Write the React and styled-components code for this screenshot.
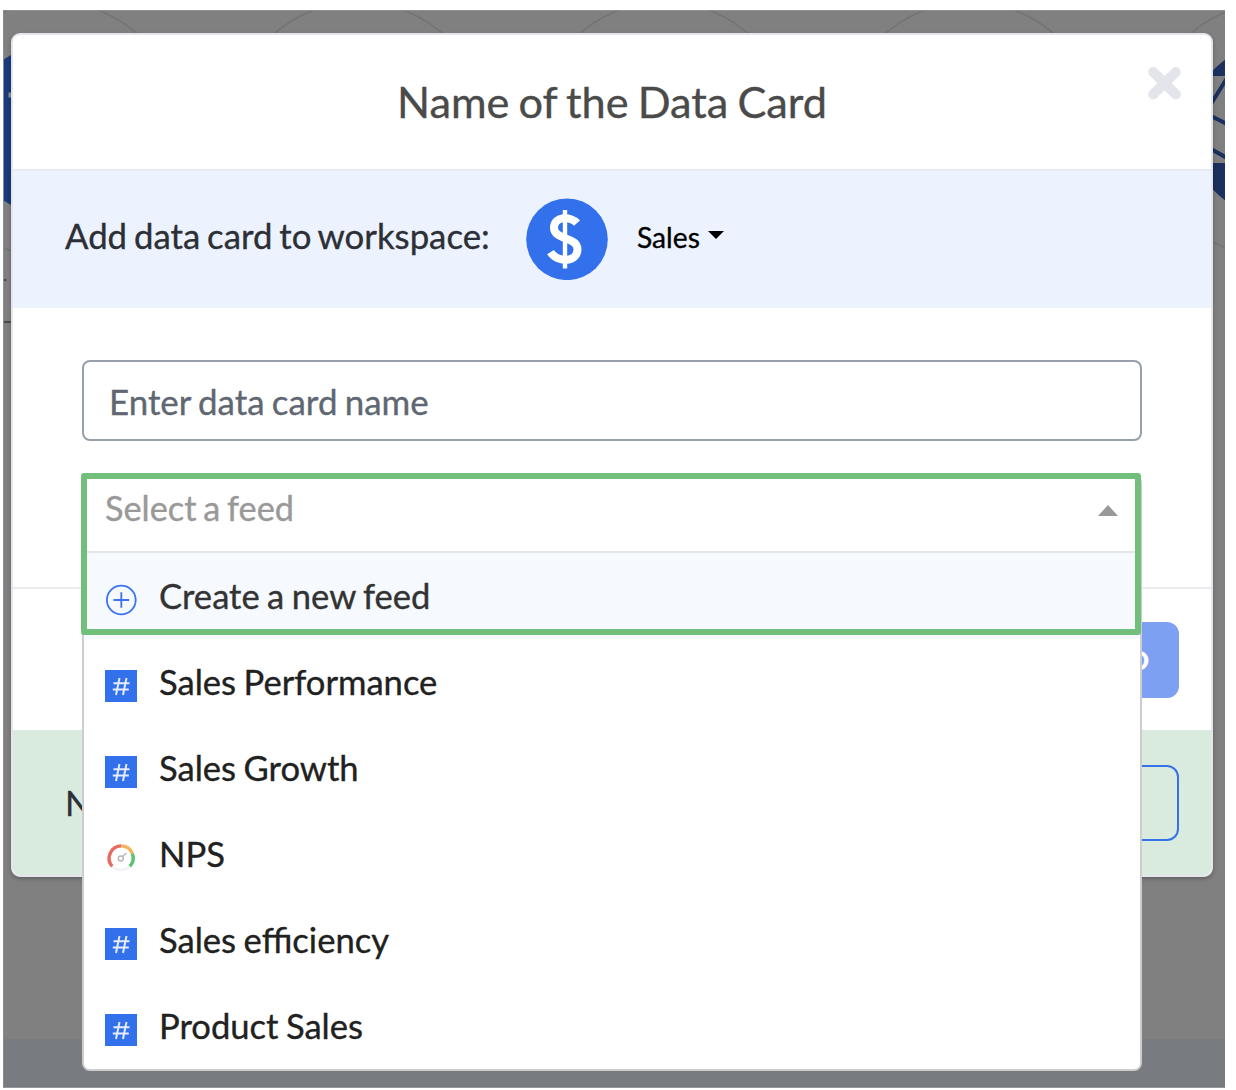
import React from "react";
import styled, { createGlobalStyle } from "styled-components";

const Global = createGlobalStyle`
  * { box-sizing: border-box; }
  body {
    margin: 0;
    background: #fff;
    font-family: Lato, "Liberation Sans", sans-serif;
    word-spacing: -2px;
    -webkit-text-stroke: 0.35px currentColor;
  }
`;

const Page = styled.main`
  width: 1236px;
  height: 1090px;
  padding: 10px 11px 2px 3px;
  overflow: hidden;
`;

const Backdrop = styled.div`
  position: relative;
  height: 1078px;
  padding: 23px 12px 0 7px;
  overflow: hidden;
  background: linear-gradient(#808080 0 1029px, #787b80 1029px);
  border-left: 1px solid #8c8c8f;
  border-bottom: 1px solid #96969b;
`;

const Scenery = styled.svg`
  position: absolute;
  left: -1px;
  top: 0;
`;

const Modal = styled.section`
  position: relative;
  width: 1202px;
  height: 844px;
  display: flex;
  flex-direction: column;
  background: #fff;
  border: 2px solid #e5e6ec;
  border-radius: 9px;
  box-shadow: 0 2px 4px rgba(0, 0, 0, 0.25);
`;

const Header = styled.header`
  position: relative;
  height: 136px;
  display: flex;
  justify-content: center;
  padding-top: 40px;
  border-bottom: 2px solid #e7ebf0;
`;

const Title = styled.h1`
  margin: 0;
  font-size: 43.3px;
  line-height: 52px;
  font-weight: 400;
  color: #4a4a4a;
  white-space: nowrap;
`;

const CloseButton = styled.button`
  position: absolute;
  right: 30px;
  top: 31px;
  padding: 0;
  border: 0;
  background: none;
  line-height: 0;
`;

const Workspace = styled.div`
  height: 137px;
  display: flex;
  align-items: center;
  padding: 0 0 1px 52px;
  background: #ecf3fe;
`;

const Label = styled.span`
  width: 461px;
  padding-bottom: 7px;
  font-size: 34.75px;
  line-height: 44px;
  color: #2c3036;
  white-space: nowrap;
`;

const WorkspacePicker = styled.div`
  display: flex;
  align-items: center;
  font-size: 28.2px;
  line-height: 36px;
  color: #000;
`;

const PickerName = styled.span`
  margin-left: 29px;
  padding-bottom: 5px;
`;

const Caret = styled.i`
  margin-left: ${(p) => p.$gap || 0}px;
  margin-bottom: ${(p) => p.$lift || 0}px;
  border: ${(p) => p.$size}px solid transparent;
  border-${(p) => (p.$up ? "bottom" : "top")}: ${(p) => p.$tall}px solid ${(p) => p.$color};
  border-${(p) => (p.$up ? "top" : "bottom")}: 0;
`;

const Body = styled.div`
  height: 281px;
  padding: 52px 69px 0;
  border-bottom: 2px solid #ebecf0;
`;

const NameInput = styled.input`
  display: block;
  width: 1060px;
  height: 81px;
  padding: 2px 26px 0 25px;
  border: 2px solid #979fab;
  border-radius: 8px;
  background: #fff;
  font: 400 34.9px Lato, "Liberation Sans", sans-serif;
  word-spacing: -1.6px;
  &::placeholder { color: #5f6772; opacity: 1; }
`;

const Select = styled.div`
  position: relative;
  width: 1060px;
  height: 78px;
  margin-top: 34px;
`;

const Menu = styled.div`
  position: absolute;
  inset: 0 0 auto 0;
  height: 596px;
  border: 2px solid #cdcdcd;
  border-radius: 8px;
  background: #fff;
  overflow: hidden;
`;

const Trigger = styled.div`
  height: 76px;
  display: flex;
  align-items: center;
  justify-content: space-between;
  padding: 0 22px 13px 21px;
  border-bottom: 2px solid #e4e5e5;
  font-size: 34.3px;
  color: #999;
`;

const Option = styled.div`
  height: 86px;
  display: flex;
  align-items: center;
  background: ${(p) => (p.$active ? "#f6f9fe" : "#fff")};
  color: ${(p) => (p.$active ? "#333" : "#212121")};
  padding: 0 21px;
  font-size: 34.6px;
  line-height: 44px;
  word-spacing: -1.4px;
`;

const OptionIcon = styled.span`
  width: 32px;
  height: 32px;
  margin: 8px 22px 0 0;
  line-height: 0;
`;

const Highlight = styled.div`
  position: absolute;
  left: -1px;
  top: -2px;
  width: 1060px;
  height: 162px;
  border: 6px solid #72be7b;
  border-radius: 3px;
`;

const Footer = styled.footer`
  height: 141px;
  display: flex;
  justify-content: flex-end;
  padding: 33px 32px 0 0;
`;

const Button = styled.button`
  width: 170px;
  height: 76px;
  padding: 0 28px 1px 0;
  border: 2px solid ${(p) => (p.$outline ? "#3972e8" : "#7ea0f2")};
  border-radius: 12px;
  background: ${(p) => (p.$outline ? "transparent" : "#7ea0f2")};
  color: #fff;
  font: 700 27px Lato, "Liberation Sans", sans-serif;
  text-align: right;
`;

const Notice = styled.div`
  flex: 1;
  display: flex;
  justify-content: space-between;
  padding: 35px 32px 0 52px;
  background: #d9ebde;
  border-radius: 0 0 7px 7px;
  font-size: 34.8px;
  line-height: 75px;
  color: #2c3036;
`;

function BackgroundArt() {
  return (
    <Scenery width="1222" height="1078" viewBox="3 10 1222 1078" fill="none">
      <g stroke="#717478" strokeWidth="1.6">
        {[53, 358.5, 664, 969.5, 1275].map((x) => (
          <circle key={x} cx={x} cy="130" r="128" />
        ))}
      </g>
      <path d="M3 10.2H1225" stroke="#969696" />
      <circle cx="53" cy="130" r="86" fill="#1a3a7d" />
      <path d="M8.5 95H12" stroke="#8d929d" strokeWidth="5" />
      <circle cx="1277" cy="130" r="87.5" fill="#1b305e" />
      <path d="M1211 76H1226V163H1211Z" fill="#808080" />
      <path d="M1211 104L1227 78M1211 116L1227 124M1211 149L1227 158" stroke="#1b305e" strokeWidth="4" />
      <path d="M3 280H6.5M4 322H12" stroke="#4b4b4b" strokeWidth="2" />
    </Scenery>
  );
}

function CloseIcon() {
  return (
    <svg width="33" height="34" viewBox="0 0 33 34">
      <path d="M5.2 6L27.8 28.4M27.8 6L5.2 28.4" stroke="#e4e5ea" strokeWidth="10" strokeLinecap="round" />
    </svg>
  );
}

function DollarIcon() {
  return (
    <svg width="82" height="82" viewBox="0 0 82 82" fill="none">
      <circle cx="41" cy="41.3" r="40.800" fill="#3370eb" />
      <path d="M51 25.200C45 18.200 28 17.700 28 29.700C28 42.200 51.500 38.700 51.500 51.200C51.500 65 31 64.500 24.500 54.200" stroke="#fff" strokeWidth="8" />
      <path d="M39 12V70.500" stroke="#fff" strokeWidth="4.400" />
    </svg>
  );
}

function PlusIcon() {
  return (
    <svg width="32" height="32" viewBox="0 0 32 32" fill="none" stroke="#3c74ed" strokeWidth="1.8">
      <circle cx="16.300" cy="16" r="14.400" />
      <path d="M8.500 16H24.200M16.300 8.200V23.800" />
    </svg>
  );
}

function HashIcon() {
  return (
    <svg width="32" height="32" viewBox="0 0 32 32" fill="none">
      <path d="M0 0H32V32H0Z" fill="#3370eb" />
      <path d="M14.500 8L11 25M21.500 8L18 25M8.500 13.200H24.500M7.800 19.500H23.800" stroke="#e4ecfd" strokeWidth="2" />
    </svg>
  );
}

function GaugeIcon() {
  return (
    <svg width="32" height="32" viewBox="0 0 32 32" fill="none" strokeWidth="3.400">
      <path d="M7.500 25Q16 31 24.500 25" stroke="#f2f2f2" strokeWidth="2.600" />
      <path d="M7.200 24.300A12.300 12.300 0 0 1 16 3.900" stroke="#e8695f" />
      <path d="M16 3.900A12.300 12.300 0 0 1 27.400 11.600" stroke="#f4b45c" />
      <path d="M27.400 11.600A12.300 12.300 0 0 1 24.800 24.300" stroke="#58c473" />
      <circle cx="15.800" cy="16.500" r="2.500" stroke="#b5b8bb" strokeWidth="1.400" />
      <path d="M17.500 14.500L21.500 11" stroke="#b5b8bb" strokeWidth="1.500" />
    </svg>
  );
}

const icons = { plus: PlusIcon, hash: HashIcon, gauge: GaugeIcon };

const feeds = [
  { name: "Create a new feed", icon: "plus", active: true },
  { name: "Sales Performance", icon: "hash" },
  { name: "Sales Growth", icon: "hash" },
  { name: "NPS", icon: "gauge" },
  { name: "Sales efficiency", icon: "hash" },
  { name: "Product Sales", icon: "hash" },
];

function FeedSelect() {
  return (
    <Select>
      <Menu>
        <Trigger>
          Select a feed
          <Caret $up $size={10.5} $tall={11} $lift={-6} $color="#999" />
        </Trigger>
        {feeds.map(({ name, icon, active }) => {
          const Icon = icons[icon];
          return (
            <Option key={name} $active={active}>
              <OptionIcon><Icon /></OptionIcon>
              {name}
            </Option>
          );
        })}
      </Menu>
      <Highlight />
    </Select>
  );
}

export default function App() {
  return (
    <Page>
      <Global />
      <Backdrop>
        <BackgroundArt />
        <Modal>
          <Header>
            <Title>Name of the Data Card</Title>
            <CloseButton aria-label="Close"><CloseIcon /></CloseButton>
          </Header>
          <Workspace>
            <Label>Add data card to workspace:</Label>
            <WorkspacePicker>
              <DollarIcon />
              <PickerName>Sales</PickerName>
              <Caret $size={8} $tall={8} $gap={8} $lift={8} $color="#000" />
            </WorkspacePicker>
          </Workspace>
          <Body>
            <NameInput placeholder="Enter data card name" />
            <FeedSelect />
          </Body>
          <Footer>
            <Button>O</Button>
          </Footer>
          <Notice>
            N
            <Button $outline />
          </Notice>
        </Modal>
      </Backdrop>
    </Page>
  );
}
